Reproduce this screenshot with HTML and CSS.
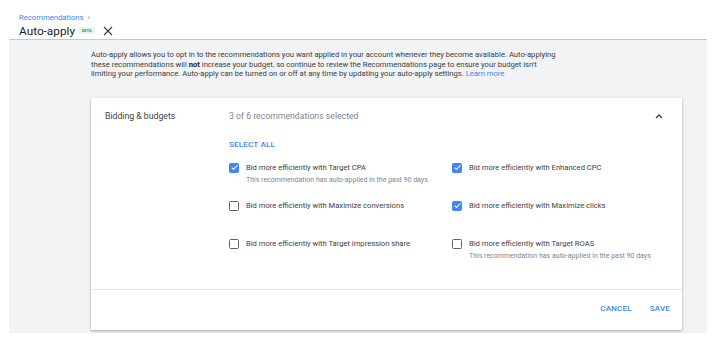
FILE: index.html
```html
<!DOCTYPE html>
<html lang="en">
<head>
    <meta charset="UTF-8">
    <meta name="viewport" content="width=device-width, initial-scale=1.0">
    <title>Auto-apply</title>
    <link rel="stylesheet" href="styles.css">
</head>
<body>
    <div class="page-header">
        <div class="breadcrumb">Recommendations <span class="crumb-arrow">&rsaquo;</span></div>
        <div class="title-row">
            <h1>Auto-apply</h1>
            <span class="beta">BETA</span>
            <svg class="close" width="10" height="10" viewBox="0 0 10 10">
                <path d="M1 1 L9 9 M9 1 L1 9" stroke="#3c4043" stroke-width="1.2" fill="none"/>
            </svg>
        </div>
    </div>

    <div class="panel">
        <p class="intro">
            Auto-apply allows you to opt in to the recommendations you want applied in your account whenever they become available. Auto-applying<br>
            these recommendations will <b>not</b> increase your budget, so continue to review the Recommendations page to ensure your budget isn't<br>
            limiting your performance. Auto-apply can be turned on or off at any time by updating your auto-apply settings. <a href="#">Learn more</a>
        </p>

        <div class="card">
            <div class="card-header">
                <div class="card-title">Bidding &amp; budgets</div>
                <div class="card-count">3 of 6 recommendations selected</div>
                <svg class="chevron" width="8" height="6" viewBox="0 0 8 6">
                    <path d="M1 5 L4 2 L7 5" stroke="#3c4043" stroke-width="1.3" fill="none"/>
                </svg>
            </div>

            <div class="card-body">
                <div class="select-all">SELECT ALL</div>
                <div class="options">
                    <div class="option">
                        <span class="box checked"></span>
                        <div>
                            <div class="label">Bid more efficiently with Target CPA</div>
                            <div class="note">This recommendation has auto-applied in the past 90 days</div>
                        </div>
                    </div>
                    <div class="option">
                        <span class="box checked"></span>
                        <div>
                            <div class="label">Bid more efficiently with Enhanced CPC</div>
                        </div>
                    </div>
                    <div class="option">
                        <span class="box"></span>
                        <div>
                            <div class="label">Bid more efficiently with Maximize conversions</div>
                        </div>
                    </div>
                    <div class="option">
                        <span class="box checked"></span>
                        <div>
                            <div class="label">Bid more efficiently with Maximize clicks</div>
                        </div>
                    </div>
                    <div class="option">
                        <span class="box"></span>
                        <div>
                            <div class="label">Bid more efficiently with Target impression share</div>
                        </div>
                    </div>
                    <div class="option">
                        <span class="box"></span>
                        <div>
                            <div class="label">Bid more efficiently with Target ROAS</div>
                            <div class="note">This recommendation has auto-applied in the past 90 days</div>
                        </div>
                    </div>
                </div>
            </div>

            <div class="card-footer">
                <span class="btn">CANCEL</span>
                <span class="btn">SAVE</span>
            </div>
        </div>
    </div>
</body>
</html>
```

FILE: styles.css
```css
body {
    margin: 0;
    background-color: #ffffff;
    font-family: Roboto, "Liberation Sans", Arial, sans-serif;
    color: #3c4043;
}
.page-header {
    padding: 13px 0 0 19px;
    height: 26px;
}
.breadcrumb {
    font-size: 7.7px;
    line-height: 10px;
    color: #4285f4;
}
.crumb-arrow {
    color: #80868b;
    margin-left: 2px;
}
.title-row {
    display: flex;
    align-items: center;
    height: 15px;
}
.title-row h1 {
    margin: 0;
    font-size: 11.8px;
    font-weight: 400;
    color: #202124;
}
.beta {
    margin-left: 4px;
    background-color: #e6f4ea;
    color: #34a853;
    font-size: 4px;
    font-weight: 700;
    padding: 1px 3px;
    border-radius: 1px;
}
.close {
    margin-left: 8px;
}
.panel {
    margin: 0 13px 0 9px;
    height: 294px;
    background-color: #f1f3f4;
    border-top: 1px solid #c6c8ca;
    padding: 10px 25px 0 82px;
    box-sizing: border-box;
}
.intro {
    margin: 0 0 19px 0;
    font-size: 7.65px;
    line-height: 9.6px;
    color: #3c4043;
    white-space: nowrap;
}
.intro b {
    font-weight: 700;
    color: #202124;
}
.intro a {
    color: #4285f4;
    text-decoration: none;
}
.card {
    background-color: #ffffff;
    box-shadow: 0 1px 2px rgba(60, 64, 67, 0.3), 0 1px 3px rgba(60, 64, 67, 0.15);
    height: 232px;
    display: flex;
    flex-direction: column;
}
.card-header {
    display: flex;
    align-items: center;
    height: 36px;
    padding: 0 19px 0 14px;
    font-size: 8.7px;
}
.card-title {
    width: 124px;
    color: #3c4043;
}
.card-count {
    flex: 1;
    color: #80868b;
}
.card-body {
    padding: 6px 0 12px 138px;
    border-bottom: 1px solid #e8eaed;
}
.select-all {
    font-size: 8px;
    line-height: 10px;
    font-weight: 500;
    color: #4285f4;
    letter-spacing: 0.2px;
    margin-bottom: 13px;
}
.options {
    display: grid;
    grid-template-columns: 223px 223px;
    grid-auto-rows: 38px;
}
.option {
    display: flex;
    gap: 7px;
}
.box {
    width: 10px;
    height: 10px;
    border: 1.4px solid #5f6368;
    border-radius: 1.5px;
    box-sizing: border-box;
    flex-shrink: 0;
}
.box.checked {
    background-color: #4285f4;
    border-color: #4285f4;
    position: relative;
}
.box.checked::after {
    content: "";
    position: absolute;
    left: 2.6px;
    top: 0.6px;
    width: 2.4px;
    height: 5px;
    border: solid #ffffff;
    border-width: 0 1.2px 1.2px 0;
    transform: rotate(45deg);
}
.label {
    font-size: 7.6px;
    line-height: 10px;
    color: #3c4043;
}
.note {
    font-size: 7px;
    line-height: 9px;
    margin-top: 3px;
    color: #80868b;
}
.card-footer {
    flex: 1;
    display: flex;
    align-items: center;
    justify-content: flex-end;
    gap: 18px;
    padding: 0 12px 3px 0;
}
.btn {
    font-size: 8px;
    font-weight: 500;
    color: #4285f4;
    letter-spacing: 0.2px;
}
```
